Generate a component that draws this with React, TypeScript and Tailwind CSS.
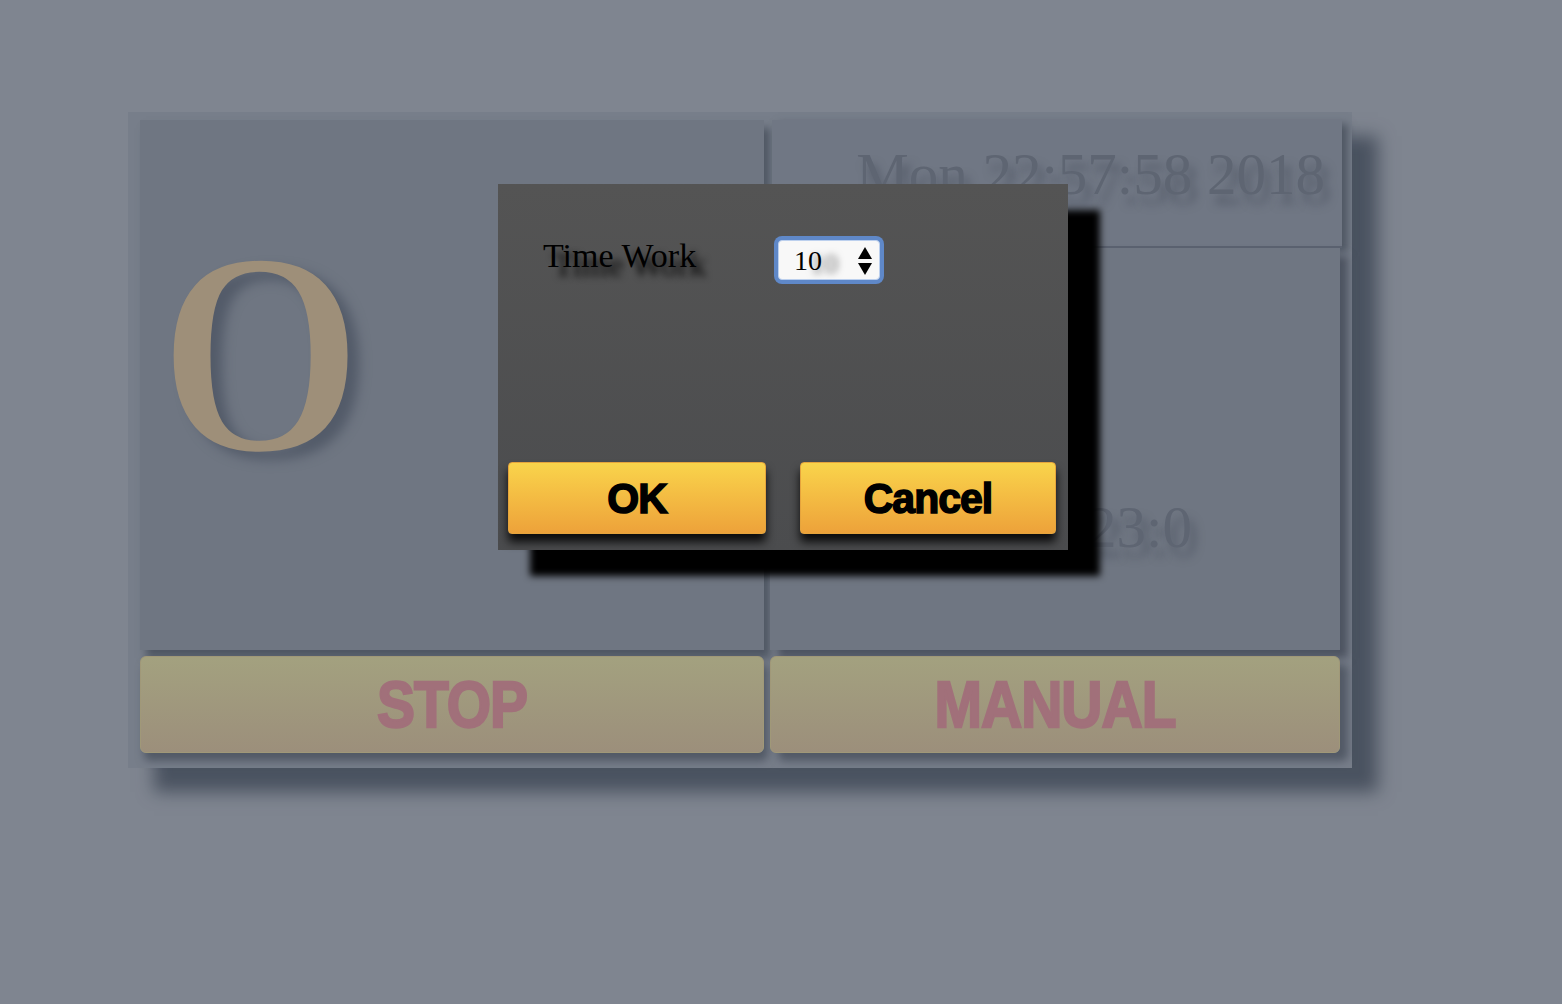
import React from "react";

export default function App() {
  return (
    <div className="relative w-full h-[1004px] overflow-hidden bg-[#7f8590] pt-[112px] pl-[128px]">
      {/* main container */}
      <div className="w-[1224px] h-[656px] bg-[#777e8a] pt-[8px] pl-[12px] flex flex-col gap-[6px] shadow-[26px_24px_16px_rgba(72,80,94,0.95)]">
        <div className="flex gap-[6px] h-[530px]">
          {/* left panel */}
          <div className="w-[624px] h-full bg-[#6f7682] shadow-[6px_8px_8px_rgba(66,73,86,0.75)] pt-[92px] pl-[18px]">
            <div className="origin-left scale-x-[1.45] text-[283px] leading-none font-['Liberation_Serif',serif] text-[#9e8f79] [text-shadow:8px_8px_10px_#535b69]">
              0
            </div>
          </div>
          {/* right column */}
          <div className="w-[570px] h-full flex flex-col">
            <div className="ml-[2px] w-[570px] h-[128px] bg-[#707784] border-b-2 border-[#5b6270] flex justify-end pt-[25px] pr-[17px] shadow-[6px_4px_8px_rgba(66,73,86,0.75)]">
              <span className="text-[59px] leading-none font-['Liberation_Serif',serif] text-[#5e6572] [text-shadow:6px_10px_9px_rgba(72,78,92,0.6)] whitespace-nowrap">
                Mon 22:57:58 2018
              </span>
            </div>
            <div className="flex-1 bg-[#6f7682] shadow-[8px_8px_8px_rgba(66,73,86,0.8)] flex justify-end pt-[250px] pr-[148px]">
              <span className="text-[59px] leading-none font-['Liberation_Serif',serif] text-[#5e6572] [text-shadow:6px_10px_9px_rgba(72,78,92,0.6)] whitespace-nowrap">
                00:23:0
              </span>
            </div>
          </div>
        </div>
        <div className="flex gap-[6px] h-[97px]">
          <button className="w-[624px] h-full rounded-[6px] bg-gradient-to-b from-[#a3a17f] to-[#9c8f7b] border border-[#a09878] shadow-[4px_8px_8px_rgba(66,73,86,0.7)] flex items-center justify-center">
            <span className="scale-y-[1.15] text-[57px] leading-none font-bold font-['Liberation_Sans',sans-serif] text-[#a1707a] tracking-[-1px] [-webkit-text-stroke:2px_#a1707a]">
              STOP
            </span>
          </button>
          <button className="w-[570px] h-full rounded-[6px] bg-gradient-to-b from-[#a3a17f] to-[#9c8f7b] border border-[#a09878] shadow-[8px_8px_8px_rgba(66,73,86,0.7)] flex items-center justify-center">
            <span className="scale-y-[1.15] text-[57px] leading-none font-bold font-['Liberation_Sans',sans-serif] text-[#a1707a] tracking-[-1px] [-webkit-text-stroke:2px_#a1707a]">
              MANUAL
            </span>
          </button>
        </div>
      </div>

      {/* dialog */}
      <div className="absolute left-[498px] top-[184px] w-[570px] h-[366px] bg-gradient-to-b from-[#545454] to-[#4b4c4e] shadow-[32px_26px_7px_#000] flex flex-col">
        <div className="flex items-center pt-[52px] pl-[45px]">
          <div className="w-[231px] text-[34px] leading-none font-['Liberation_Serif',serif] text-black [text-shadow:10px_9px_7px_rgba(0,0,0,0.9)] -mt-[8px]">
            Time Work
          </div>
          <div className="w-[110px] h-[48px] rounded-[8px] bg-[#5f88c8] p-[4px]">
            <div className="w-full h-full rounded-[4px] bg-[#f8f8f8] border border-[#bcd0ee] flex items-center justify-between pl-[15px] pr-[6px]">
              <span className="text-[28px] leading-none font-['Liberation_Serif',serif] text-black [text-shadow:16px_3px_7px_rgba(0,0,0,0.55)] pt-[2px]">
                10
              </span>
              <svg width="16" height="32" viewBox="0 0 16 32">
                <polygon points="8,3 15,15 1,15" fill="#000" />
                <polygon points="1,19 15,19 8,31" fill="#000" />
              </svg>
            </div>
          </div>
        </div>
        <div className="mt-auto flex gap-[34px] pl-[10px] pr-[12px] pb-[16px]">
          <button className="w-[258px] h-[72px] rounded-[4px] bg-gradient-to-b from-[#f9d44b] to-[#eda23a] border border-[#e6a43c] shadow-[0_8px_10px_rgba(0,0,0,0.85)] flex items-center justify-center">
            <span className="text-[41px] leading-none font-bold font-['Liberation_Sans',sans-serif] text-black tracking-[-1px] scale-y-[1.05] [-webkit-text-stroke:1.5px_#000]">
              OK
            </span>
          </button>
          <button className="w-[256px] h-[72px] rounded-[4px] bg-gradient-to-b from-[#f9d44b] to-[#eda23a] border border-[#e6a43c] shadow-[0_8px_10px_rgba(0,0,0,0.85)] flex items-center justify-center">
            <span className="text-[41px] leading-none font-bold font-['Liberation_Sans',sans-serif] text-black tracking-[-1px] scale-y-[1.05] [-webkit-text-stroke:1.5px_#000]">
              Cancel
            </span>
          </button>
        </div>
      </div>
    </div>
  );
}
